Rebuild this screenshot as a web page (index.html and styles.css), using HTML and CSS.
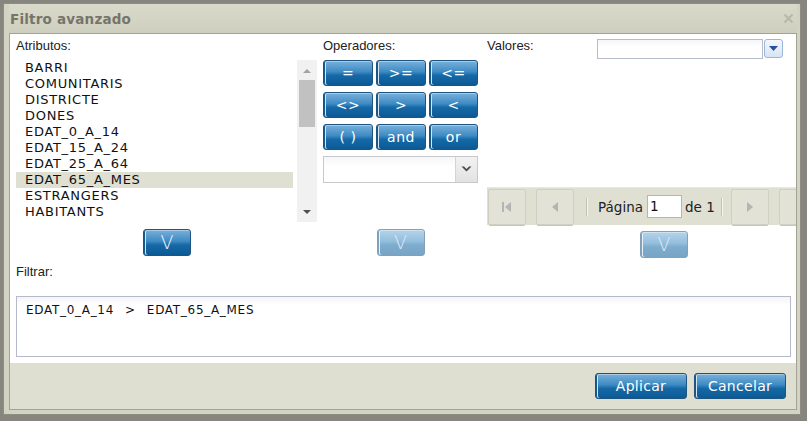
FILE: index.html
```html
<!DOCTYPE html>
<html lang="es">
<head>
  <meta charset="UTF-8" />
  <meta name="viewport" content="width=device-width, initial-scale=1.0"/>
  <title>Filtro avanzado</title>
  <link rel="stylesheet" href="styles.css">
</head>
<body>

  <div class="win">
    <div class="win-head">
      <span class="win-title">Filtro avanzado</span>
      <span class="win-close">
        <svg width="11" height="11" viewBox="0 0 11 11"><path d="M1.5 1.5 L9.5 9.5 M9.5 1.5 L1.5 9.5" stroke="#b9b9aa" stroke-width="2.2" fill="none"/></svg>
      </span>
    </div>

    <div class="win-inner">
      <div class="win-body">
        <div class="cols">

          <!-- Attributes -->
          <div class="col col-attr">
            <div class="lbl">Atributos:</div>
            <div class="list">
              <ul class="list-items">
                <li>BARRI</li>
                <li>COMUNITARIS</li>
                <li>DISTRICTE</li>
                <li>DONES</li>
                <li>EDAT_0_A_14</li>
                <li>EDAT_15_A_24</li>
                <li>EDAT_25_A_64</li>
                <li class="selected">EDAT_65_A_MES</li>
                <li>ESTRANGERS</li>
                <li>HABITANTS</li>
              </ul>
              <div class="vscroll">
                <span class="arr arr-up"></span>
                <span class="thumb"></span>
                <span class="track"></span>
                <span class="arr arr-down"></span>
              </div>
            </div>
            <div class="add-row">
              <button class="btn btn-add">V</button>
            </div>
          </div>

          <!-- Operators -->
          <div class="col col-ops">
            <div class="lbl">Operadores:</div>
            <div class="ops">
              <button class="btn btn-op">=</button>
              <button class="btn btn-op">&gt;=</button>
              <button class="btn btn-op">&lt;=</button>
              <button class="btn btn-op">&lt;&gt;</button>
              <button class="btn btn-op">&gt;</button>
              <button class="btn btn-op">&lt;</button>
              <button class="btn btn-op">( )</button>
              <button class="btn btn-op">and</button>
              <button class="btn btn-op">or</button>
            </div>
            <div class="combo combo-ops">
              <span class="combo-input"></span>
              <span class="combo-trig">
                <svg width="11" height="7" viewBox="0 0 11 7"><path d="M0.5 0.5 L5.5 5.5 L10.5 0.5 L8 0.5 L5.5 3 L3 0.5 Z" fill="#4a4a4a"/></svg>
              </span>
            </div>
            <div class="add-row">
              <button class="btn btn-add" disabled>V</button>
            </div>
          </div>

          <!-- Values -->
          <div class="col col-vals">
            <div class="vals-head">
              <span class="lbl lbl-vals">Valores:</span>
              <div class="combo combo-vals">
                <span class="combo-input"></span>
                <span class="combo-trig">
                  <svg width="9" height="5" viewBox="0 0 9 5"><path d="M0 0 H9 L4.5 5 Z" fill="#2a4f9e"/></svg>
                </span>
              </div>
            </div>
            <div class="pager">
              <span class="pg-btn pg-first">
                <svg width="12" height="12" viewBox="0 0 12 12"><rect x="1" y="1" width="2" height="10" fill="#b4b4b4"/><path d="M10 1 L4 6 L10 11 Z" fill="#b4b4b4"/></svg>
              </span>
              <span class="pg-btn pg-prev">
                <svg width="8" height="12" viewBox="0 0 8 12"><path d="M7 1 L1 6 L7 11 Z" fill="#b4b4b4"/></svg>
              </span>
              <span class="pg-sep"></span>
              <span class="pg-text">Página</span>
              <span class="pg-input">1</span>
              <span class="pg-text pg-of">de 1</span>
              <span class="pg-sep"></span>
              <span class="pg-btn pg-next">
                <svg width="8" height="12" viewBox="0 0 8 12"><path d="M1 1 L7 6 L1 11 Z" fill="#b4b4b4"/></svg>
              </span>
              <span class="pg-btn pg-last"></span>
            </div>
            <div class="add-row add-vals">
              <button class="btn btn-add" disabled>V</button>
            </div>
          </div>

        </div>

        <div class="lbl lbl-filter">Filtrar:</div>
        <div class="filter-box">EDAT_0_A_14  &gt;  EDAT_65_A_MES</div>
      </div>

      <div class="win-foot">
        <button class="btn btn-foot">Aplicar</button>
        <button class="btn btn-foot">Cancelar</button>
      </div>
    </div>
  </div>

</body>
</html>
```

FILE: styles.css
```css
body {
  margin: 0;
  padding: 3px 0 0 3px;
  background: #86867e;
  font-family: "DejaVu Sans", Verdana, sans-serif;
  font-size: 13px;
  color: #111;
}

.win {
  box-sizing: border-box;
  width: 798px;
  border: 1px solid #8e8e80;
  background: #d3d3c3;
  padding: 0 3px 4px 5px;
}

.win-head {
  height: 29px;
  display: flex;
  align-items: center;
  justify-content: space-between;
  background: linear-gradient(#dadaca, #cfcfbf);
}

.win-title {
  padding-left: 1px;
  font-weight: bold;
  font-size: 13.5px;
  color: #75756a;
  letter-spacing: 0.2px;
}

.win-close {
  display: flex;
  margin-right: 3px;
}

.win-inner {
  border: 1px solid #a3a394;
}

.win-body {
  background: #fff;
  padding: 5px 0 6px 6px;
  height: 329px;
  box-sizing: border-box;
}

.lbl {
  font-family: "Liberation Sans", Arial, sans-serif;
  font-size: 13px;
  color: #222;
  height: 21px;
  line-height: 14px;
}

.cols {
  display: flex;
  height: 219px;
}

.col-attr {
  width: 302px;
  margin-right: 5px;
}

.col-ops {
  width: 155px;
  margin-right: 9px;
}

.col-vals {
  flex: 1;
  overflow: hidden;
}

/* attribute list */
.list {
  display: flex;
  width: 301px;
  height: 162px;
}

.list-items {
  list-style: none;
  margin: 0 4px 0 0;
  padding: 0;
  flex: 1;
}

.list-items li {
  height: 16px;
  line-height: 16px;
  padding-left: 9px;
  letter-spacing: 0.7px;
}

.list-items li.selected {
  background: #dfdfd2;
}

.vscroll {
  width: 20px;
  background: #f1f1f1;
  display: flex;
  flex-direction: column;
  align-items: center;
}

.vscroll .arr {
  height: 20px;
  width: 100%;
  position: relative;
}

.vscroll .arr::after {
  content: "";
  position: absolute;
  left: 6px;
  border-left: 4px solid transparent;
  border-right: 4px solid transparent;
}

.arr-up::after {
  top: 9px;
  border-bottom: 4px solid #a3a3a3;
}

.arr-down::after {
  top: 8px;
  border-top: 4px solid #505050;
}

.vscroll .thumb {
  width: 16px;
  height: 47px;
  background: #c1c1c1;
}

.vscroll .track {
  flex: 1;
}

/* buttons */
.btn {
  box-sizing: border-box;
  height: 26px;
  padding: 0;
  border: 1px solid #1d5580;
  border-radius: 3px;
  background: linear-gradient(#79b1da, #3d8ac4 45%, #1669a6 60%, #0b5a96);
  box-shadow: inset 1px 0 0 #15588a, inset 2px 0 0 #d6e7f3, inset 0 1px 0 #a9cbe6;
  color: #fff;
  font-family: "DejaVu Sans", Verdana, sans-serif;
  font-size: 13px;
}

.btn:disabled {
  opacity: 0.55;
  color: #bcd7ec;
}

.add-row {
  display: flex;
  justify-content: center;
  margin-top: 7px;
}

.btn-add {
  width: 48px;
  height: 27px;
  font-family: "DejaVu Sans", Verdana, sans-serif;
  font-size: 19px;
  font-weight: 200;
  line-height: 1;
  color: #eaf3fa;
}

.ops {
  display: grid;
  grid-template-columns: 50px 50px 49px;
  grid-auto-rows: 26px;
  gap: 6px 3px;
}

.btn-op {
  font-size: 14px;
  letter-spacing: 0.5px;
}

/* combos */
.combo {
  display: flex;
  box-sizing: border-box;
}

.combo-input {
  flex: 1;
  box-sizing: border-box;
  background: linear-gradient(#f5f6f8, #fff 40%);
}

.combo-ops {
  margin-top: 6px;
  height: 27px;
  border: 1px solid #c9c9c9;
}

.combo-ops .combo-trig {
  width: 21px;
  display: flex;
  align-items: center;
  justify-content: center;
  background: linear-gradient(#f2f2f2, #e2e2e2);
  border-left: 1px solid #d4d4d4;
}

.col-ops .add-row {
  margin-top: 46px;
}

.vals-head {
  display: flex;
  height: 21px;
}

.lbl-vals {
  width: 110px;
}

.combo-vals {
  height: 20px;
}

.combo-vals .combo-input {
  width: 166px;
  flex: none;
  border: 1px solid #b7bccb;
}

.combo-vals .combo-trig {
  box-sizing: border-box;
  width: 19px;
  height: 19px;
  margin-left: 1px;
  border: 1px solid #9bb6da;
  border-radius: 3px;
  background: linear-gradient(#f4f8fc, #d8e4f3);
  display: flex;
  align-items: center;
  justify-content: center;
}

/* pager */
.pager {
  box-sizing: border-box;
  width: 360px;
  height: 38px;
  margin-top: 127px;
  padding-left: 1px;
  background: #dfdfd2;
  border-top: 1px solid #e8e8dd;
  display: flex;
  align-items: center;
}

.pg-btn {
  box-sizing: border-box;
  width: 38px;
  height: 36px;
  border: 1px solid #d0d0c2;
  border-radius: 2px;
  background: #e2e2d6;
  box-shadow: 0 2px 0 -1px #b9c8d8;
  display: flex;
  align-items: center;
  justify-content: center;
  flex: none;
}

.pg-first {
  margin-right: 10px;
}

.pg-prev {
  margin-right: 12px;
}

.pg-sep {
  width: 1px;
  height: 18px;
  background: #c3c3b4;
  box-shadow: 1px 0 0 #f4f4ee;
  margin-right: 11px;
  flex: none;
}

.pg-text {
  font-size: 13.5px;
  color: #222;
  white-space: nowrap;
}

.pg-input {
  box-sizing: border-box;
  width: 35px;
  height: 23px;
  margin-left: 4px;
  padding: 2px 0 0 2px;
  background: #fff;
  border: 1px solid #b5b5b5;
  font-size: 13.5px;
  flex: none;
}

.pg-of {
  margin-left: 3px;
  margin-right: 6px;
}

.pg-of + .pg-sep {
  margin-right: 9px;
}

.pg-next {
  margin-right: 10px;
}

.add-vals {
  justify-content: flex-start;
  margin-top: 6px;
  padding-left: 153px;
}

/* filter */
.lbl-filter {
  margin-top: 6px;
  height: 16px;
  line-height: 16px;
}

.filter-box {
  box-sizing: border-box;
  margin-top: 16px;
  margin-right: 5px;
  height: 61px;
  padding: 5px 9px;
  line-height: 16px;
  border: 1px solid #b6b9c9;
  background: linear-gradient(#f3f4f7, #fff 8px);
  white-space: pre;
  font-size: 12px;
  letter-spacing: 0.7px;
  word-spacing: 1px;
}

/* footer */
.win-foot {
  height: 46px;
  box-sizing: border-box;
  background: #dfdfd1;
  padding: 10px 10px 0 0;
  display: flex;
  justify-content: flex-end;
  gap: 7px;
}

.btn-foot {
  width: 92px;
  font-size: 14px;
  letter-spacing: 0.3px;
}
```
